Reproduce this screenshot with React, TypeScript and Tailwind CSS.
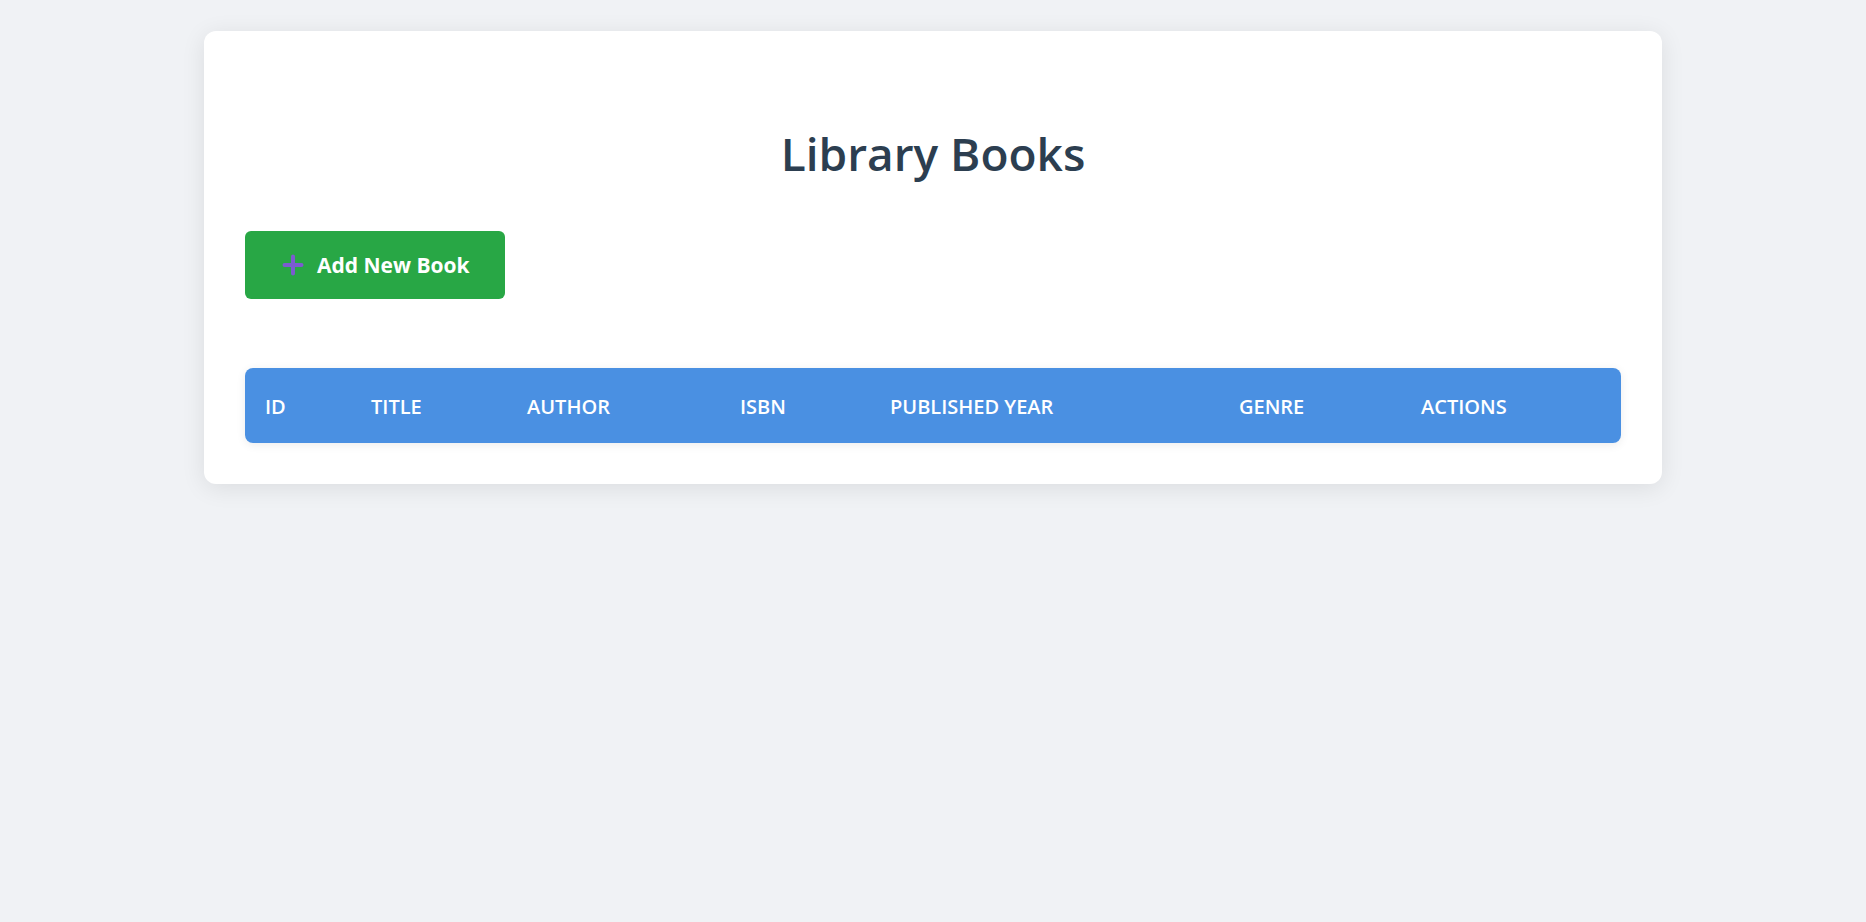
import React from "react";

const columns = [
  { label: "ID", width: "w-[106px]" },
  { label: "Title", width: "w-[156px]" },
  { label: "Author", width: "w-[213px]" },
  { label: "ISBN", width: "w-[150px]" },
  { label: "Published Year", width: "w-[349px]" },
  { label: "Genre", width: "w-[182px]" },
  { label: "Actions", width: "" },
];

const PlusIcon = () => (
  <svg width="22" height="22" viewBox="0 0 22 22" fill="none" aria-hidden="true">
    <path
      d="M11 2.5v17M2.5 11h17"
      stroke="#7b5bd0"
      strokeWidth="4"
      strokeLinecap="round"
    />
  </svg>
);

const App = () => {
  return (
    <div
      className="min-h-screen bg-[#f0f2f5] pt-[31px]"
      style={{ fontFamily: '"Open Sans", "Noto Sans", sans-serif' }}
    >
      <div className="mx-auto w-[1458px] rounded-xl bg-white px-[41px] pb-[41px] pt-[92px] shadow-[0_4px_24px_rgba(0,0,0,0.09)]">
        {/* Heading */}
        <h1 className="text-center text-[46px] font-semibold leading-[60px] text-[#2c3e50]">
          Library Books
        </h1>

        {/* Add button */}
        <button className="mt-[48px] flex h-[68px] items-center gap-[13px] rounded-md bg-[#28a745] pl-[37px] pr-[35px] text-[21px] font-bold text-white">
          <PlusIcon />
          <span className="pt-[2px]">Add New Book</span>
        </button>

        {/* Books table */}
        <div className="mt-[69px] overflow-hidden rounded-lg shadow-[0_2px_10px_rgba(0,0,0,0.08)]">
          <table className="w-full table-fixed border-collapse">
            <thead>
              <tr className="h-[75px] bg-[#4a90e2] text-white">
                {columns.map((col) => (
                  <th
                    key={col.label}
                    className={`${col.width} pl-[20px] pt-[2px] text-left text-[20px] font-semibold uppercase`}
                  >
                    {col.label}
                  </th>
                ))}
              </tr>
            </thead>
            <tbody></tbody>
          </table>
        </div>
      </div>
    </div>
  );
};

export default App;
